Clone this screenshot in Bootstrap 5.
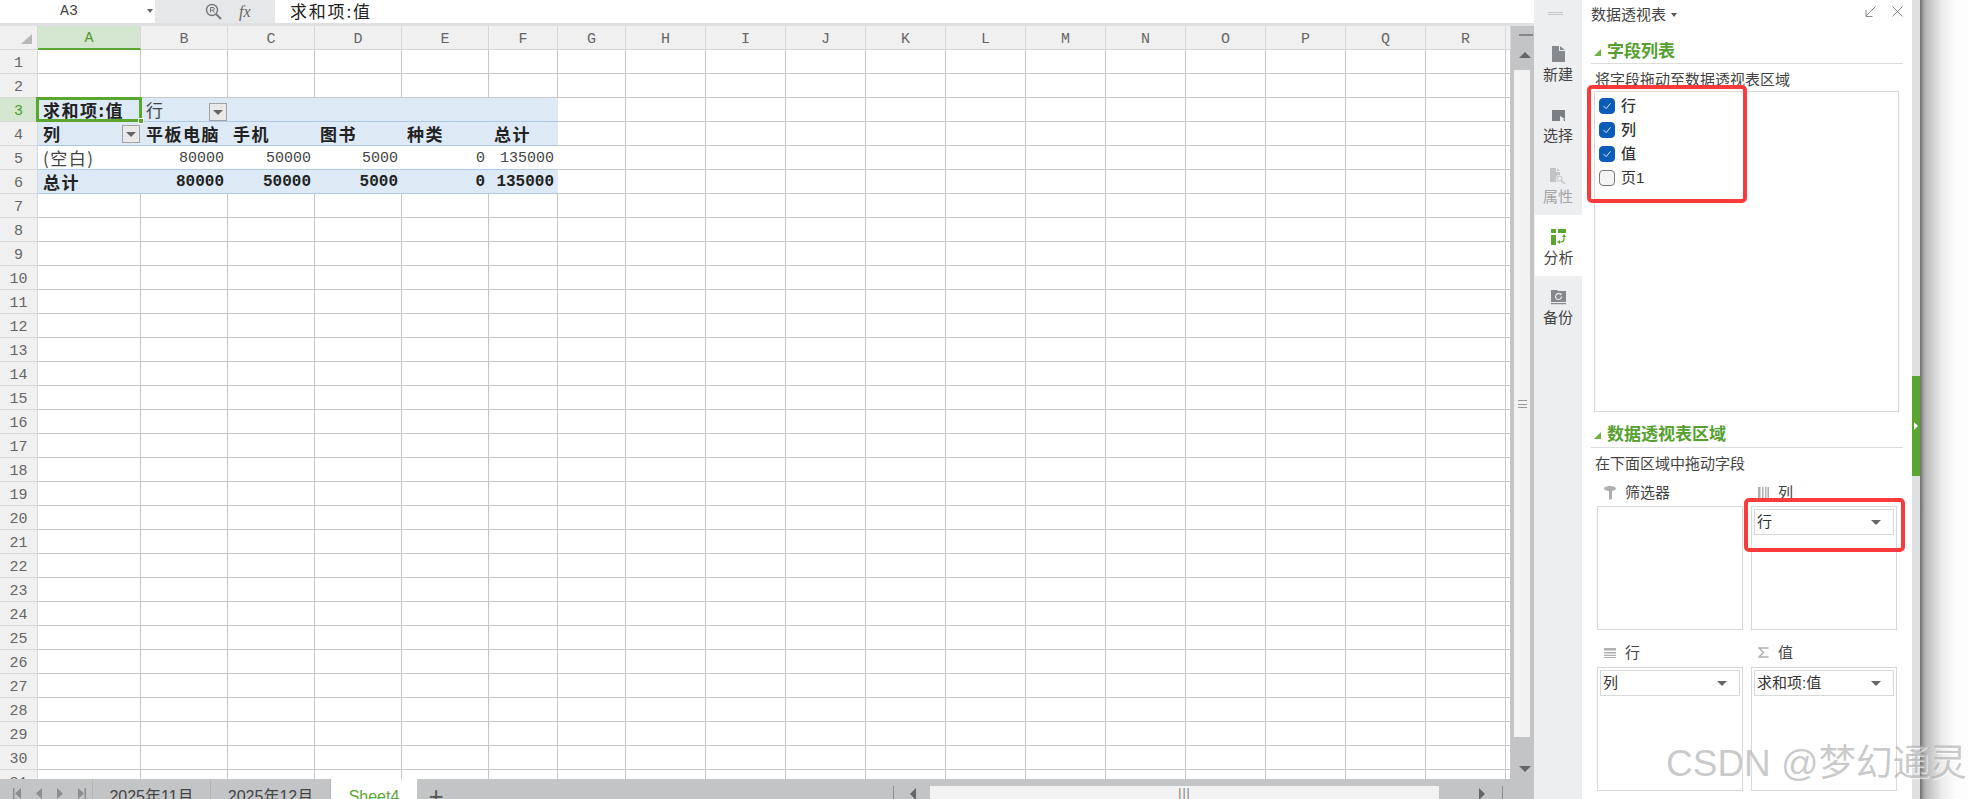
<!DOCTYPE html>
<html lang="zh-CN">
<head>
  <meta charset="UTF-8" />
  <title>数据透视表</title>
  <link href="https://cdn.jsdelivr.net/npm/bootstrap@5.3.3/dist/css/bootstrap.min.css" rel="stylesheet" />
  <style>
    html, body { height: 799px; overflow: hidden; }
    body {
      background: #fff;
      color: #333;
      font-family: "Liberation Sans", "Noto Sans CJK SC", sans-serif;
      font-size: 15px;
      line-height: 1.2;
    }
    .app-shell { width: 1968px; height: 799px; }
    .sheet-pane { width: 1534px; background: #c3c4c6; }

    /* formula bar */
    .fx-bar { height: 26px; background: #fff; border-bottom: 3px solid #dfe0e1; }
    .name-box { width: 155px; font: 15px "Liberation Mono", monospace; padding-left: 60px; color: #444; }
    .name-caret { position: absolute; left: 147px; top: 9px; border: 3px solid transparent; border-top: 4px solid #666; }
    .fx-tools { width: 120px; background: #e6e7e8; gap: 17px; padding-left: 50px; }
    .fx-mark { font: italic 16px "Liberation Serif", serif; color: #666; }
    .fx-value { padding-left: 15px; padding-bottom: 2px; font: 17px "Noto Sans CJK SC", sans-serif; letter-spacing: 1.8px; color: #222; }

    /* sheet */
    .grid-wrap { height: 753px; }
    .grid-area { width: 1511px; overflow: hidden; background: #fff; }
    .cells { border-collapse: separate; border-spacing: 0; table-layout: fixed; width: 1511px; }
    .cells td, .cells th {
      height: 24px; padding: 2px 4px 0; overflow: hidden; white-space: nowrap;
      border-right: 1px solid #c8c8c8; border-bottom: 1px solid #c8c8c8;
      font: 15px/21px "Liberation Mono", "Noto Sans CJK SC", monospace; color: #444; position: relative;
    }
    .cells thead th { height: 23px; padding-top: 3px; line-height: 19px; background: #f0f0f0; text-align: center; font-weight: 400; color: #666; border-color: #d8d8d8; }
    .cells .row-no { background: #f0f0f0; text-align: center; font-weight: 400; color: #666; padding: 4px 0 0; line-height: 19px; border-color: #d8d8d8; }
    .cells .corner::after {
      content: ""; position: absolute; right: 5px; bottom: 5px;
      border-left: 11px solid transparent; border-bottom: 10px solid #b7b7b7;
    }
    .cells .active-head { background: #d5e6d0; color: #4f9a2c; border-bottom: 2px solid #5aa72f; }
    .cells .row-no.active-head { border-bottom: 1px solid #d8d8d8; }
    .cells td.pv { border-right: 0; border-bottom: 1px solid #adc8e8; }
    .cells td.pv-fill { background: #ddeaf6; }
    .cells td.pv-bold { font-weight: 700; color: #222; }
    .cells td.pv-cjk { font-family: "Noto Sans CJK SC", sans-serif; font-size: 17px; line-height: 20px; letter-spacing: 1.5px; padding: 0 4px 0 5px; }
    .cells td.pv-num { text-align: right; padding-right: 4px; }
    .cells td.pv-num.pv-bold { font-size: 16px; }
    .cells td.picked { overflow: visible; z-index: 2; }
    .cells td.picked::before {
      content: ""; position: absolute; left: -2px; right: -1px; top: -1px; bottom: -1px;
      border: 3px solid #5aa72f;
    }
    .cells td.picked::after {
      content: ""; position: absolute; right: -3px; bottom: -3px; width: 6px; height: 6px;
      background: #5aa72f; border: 1px solid #fff;
    }
    .pv-drop {
      position: absolute; right: 1px; top: 3px; width: 18px; height: 18px;
      background: #e9e9e9; border: 1px solid #a3a3a3;
    }
    .pv-drop::after {
      content: ""; position: absolute; left: 3px; top: 6px;
      border: 5px solid transparent; border-top: 5px solid #666;
    }
    .pv-drop-far { left: 68px; right: auto; top: 5px; }

    /* vertical scrollbar */
    .vscroll { width: 23px; padding: 0 4px 0 3px; background: #c3c4c6; }
    .vs-cap { height: 44px; }
    .vs-cap-end { height: 42px; }
    .vs-thumb { background: #f2f2f2; }
    .vs-dash { width: 14px; height: 2px; background: #888; position: absolute; left: 5px; top: 8px; }
    .vs-up, .vs-down { position: absolute; left: 3px; border: 6px solid transparent; border-width: 0 6px 6px; border-bottom-color: #666; width: 0; }
    .vs-up { top: 26px; left: 5px; }
    .vs-down { bottom: 7px; left: 5px; border-width: 6px 6px 0; border-top-color: #666; border-bottom-color: transparent; }
    .vs-grip { width: 9px; height: 8px; border-top: 1px solid #999; border-bottom: 1px solid #999; position: relative; }
    .vs-grip::after { content: ""; position: absolute; left: 0; right: 0; top: 3px; border-top: 1px solid #999; }

    /* sheet tabs */
    .tab-strip { height: 20px; background: #c3c4c6; font-size: 16px; color: #444; overflow: hidden; }
    .tab-nav { width: 93px; border-right: 1px solid #b5b5b5; gap: 15px; padding-left: 13px; padding-top: 9px; }
    .tab-nav svg { flex: none; }
    .sheet-tab { height: 20px; padding-top: 8px; text-align: center; border-right: 1px solid #b5b5b5; line-height: 20px; white-space: nowrap; }
    .sheet-tab-a { width: 118px; }
    .sheet-tab-b { width: 120px; }
    .sheet-tab-on { width: 86px; background: #fff; color: #5aa72f; border-right: 0; }
    .add-tab { width: 38px; text-align: center; font-size: 26px; line-height: 20px; padding-top: 7px; color: #555; }
    .hscroll { margin-left: auto; width: 641px; padding-top: 7px; height: 20px; }
    .hs-sep { width: 1px; height: 13px; background: #8e8e8e; }
    .hs-left, .hs-right { width: 0; height: 0; margin-top: 2px; border: 6px solid transparent; }
    .hs-left { border-right-color: #666; border-left-width: 0; margin-left: 16px; margin-right: 14px; }
    .hs-right { border-left-color: #666; border-right-width: 0; margin-left: 40px; margin-right: 17px; }
    .hs-thumb { width: 509px; background: #f2f2f2; text-align: center; font-size: 12px; line-height: 14px; color: #777; letter-spacing: 1px; }

    /* side tabs */
    .side-tabs { width: 48px; background: #edeef0; padding-top: 32px; }
    .side-drag { position: absolute; left: 14px; top: 12px; width: 15px; height: 3px; border-top: 1px solid #c5c5c5; border-bottom: 1px solid #c5c5c5; }
    .side-item { height: 61px; padding-top: 14px; font-size: 15px; color: #444; gap: 4px; }
    .side-item svg { display: block; }
    .side-off { color: #a5a5a5; }
    .side-on { background: #fff; margin-left: 1px; }

    /* task pane */
    .task-pane { width: 330px; padding: 0 9px; background: #fff; }
    .pane-top { height: 32px; padding-top: 6px; font-size: 15px; color: #444; }
    .pane-caret { display: inline-block; margin-left: 5px; vertical-align: 3px; border: 3px solid transparent; border-top: 4px solid #555; border-bottom: 0; }
    .pane-head {
      height: 32px; display: flex; align-items: center; gap: 6px; padding-left: 3px; padding-top: 10px;
      color: #55a02e; font-weight: 700; font-size: 17px; border-bottom: 1px solid #dcdcdc;
    }
    .pane-head-low { height: 36px; padding-top: 12px; }
    .pane-tri { width: 0; height: 0; border-left: 7px solid transparent; border-bottom: 7px solid #6cb33f; }
    .pane-note { padding: 7px 0 3px 4px; font-size: 15px; line-height: 18px; color: #444; height: 27px; }
    .field-box { position: relative; margin: 0 4px 0 3px; height: 321px; border: 1px solid #d8d8d8; padding: 2px 0 0 4px; }
    .field-line { height: 24px; margin: 0; min-height: 0; padding: 0; gap: 6px; font-size: 15px; color: #333; }
    .field-line b { font-weight: 500; }
    .field-line .form-check-input {
      margin: 0; width: 16px; height: 16px; flex: none; border-radius: 4px; border-color: #777; background-color: #f4f4f4;
    }
    .field-line .form-check-input:checked {
      background-color: #0b5cb8; border-color: #0b5cb8;
      background-image: url("data:image/svg+xml,%3csvg xmlns='http://www.w3.org/2000/svg' viewBox='0 0 16 16'%3e%3cpath fill='none' stroke='%23fff' stroke-width='1' d='M4 8l3 3 5-6'/%3e%3c/svg%3e");
    }
    .red-mark { position: absolute; border: 4px solid #fb3a3c; border-radius: 5px; z-index: 5; pointer-events: none; }
    .red-fields { left: -8px; top: -7px; width: 160px; height: 118px; }
    .red-zone { left: -8px; top: -9px; width: 161px; height: 54px; }
    .zone-grid { display: grid; grid-template-columns: 146px 146px; column-gap: 8px; padding-left: 6px; }
    .zone-label { height: 31px; padding: 5px 0 0 7px; gap: 9px; font-size: 15px; color: #444; display: flex; align-items: center; }
    .zone-label-wide { height: 37px; padding-top: 8px; }
    .zone-box { position: relative; height: 124px; border: 1px solid #d8d8d8; padding: 2px 2px 0; }
    .zone-chip {
      height: 26px; border: 1px solid #d8d8d8; padding: 0 2px; font-size: 15px; line-height: 24px; color: #333;
      display: flex; justify-content: space-between; align-items: center;
    }
    .chip-caret { width: 0; height: 0; margin-right: 10px; border: 5px solid transparent; border-top: 5px solid #666; border-bottom: 0; }

    /* right edge */
    .pane-edge { width: 8px; background: #dfe0e2; padding-top: 376px; }
    .edge-green { height: 100px; background: #58a52f; position: relative; }
    .edge-green::after {
      content: ""; position: absolute; left: 2px; top: 46px;
      border: 4px solid transparent; border-left: 4px solid #fff; border-right: 0;
    }
    .desk-shade { flex: 1; background: linear-gradient(to right, #6f6f6f, #b5b5b5 5px, #ececec 22px, #fdfdfd 36px); }

    .csdn-mark {
      position: absolute; left: 1666px; top: 742px; font-size: 37px; line-height: 44px; white-space: nowrap;
      color: rgba(150,150,150,.5); text-shadow: 1px 1px 1px rgba(255,255,255,.7); z-index: 6;
    }
  </style>
</head>
<body>
  <div class="app-shell d-flex position-relative">

    <!-- 表格区域 -->
    <div class="sheet-pane d-flex flex-column">
      <div class="fx-bar d-flex">
        <div class="name-box position-relative d-flex align-items-center">A3<span class="name-caret"></span></div>
        <div class="fx-tools d-flex align-items-center">
          <svg width="17" height="17" viewBox="0 0 17 17" fill="none" stroke="#777" stroke-width="1.4"><circle cx="7" cy="7" r="5.5"/><path d="M11 11l5 5" stroke-width="2"/><path d="M5.5 9.5v-5h2.5a1.3 1.3 0 0 1 0 2.7h-2.5M7.5 7.2l1.8 2.3" stroke-width="1"/></svg>
          <span class="fx-mark">fx</span>
        </div>
        <div class="fx-value d-flex align-items-center">求和项:值</div>
      </div>

      <div class="grid-wrap d-flex">
        <div class="grid-area">
          <table class="cells" id="cells"></table>
        </div>
        <div class="vscroll d-flex flex-column">
          <div class="vs-cap position-relative"><span class="vs-dash"></span><span class="vs-up"></span></div>
          <div class="vs-thumb flex-grow-1 d-flex align-items-center justify-content-center"><div class="vs-grip"></div></div>
          <div class="vs-cap-end position-relative"><span class="vs-down"></span></div>
        </div>
      </div>

      <div class="tab-strip d-flex">
        <div class="tab-nav d-flex">
          <svg width="8" height="11" viewBox="0 0 8 11" fill="#8d8d8d"><path d="M0 0h1.500v11H0zM8 0v11L2 5.500z"/></svg>
          <svg width="6" height="11" viewBox="0 0 6 11" fill="#8d8d8d"><path d="M6 0v11L0 5.500z"/></svg>
          <svg width="6" height="11" viewBox="0 0 6 11" fill="#8d8d8d"><path d="M0 0v11l6-5.500z"/></svg>
          <svg width="8" height="11" viewBox="0 0 8 11" fill="#8d8d8d"><path d="M6.500 0H8v11H6.500zM0 0v11l6-5.500z"/></svg>
        </div>
        <div class="sheet-tab sheet-tab-a">2025年11月</div>
        <div class="sheet-tab sheet-tab-b">2025年12月</div>
        <div class="sheet-tab sheet-tab-on">Sheet4</div>
        <div class="add-tab">+</div>
        <div class="hscroll d-flex">
          <span class="hs-sep"></span>
          <span class="hs-left"></span>
          <div class="hs-thumb">|||</div>
          <span class="hs-right"></span>
          <span class="hs-sep"></span>
        </div>
      </div>
    </div>

    <!-- 侧边按钮 -->
    <div class="side-tabs position-relative">
      <span class="side-drag"></span>
      <div class="side-item d-flex flex-column align-items-center">
        <svg width="13" height="16" viewBox="0 0 13 16" fill="#85888c"><path d="M0 0h7v5h6v11H0zM8 0l5 4H8z"/></svg>
        <span>新建</span>
      </div>
      <div class="side-item d-flex flex-column align-items-center">
        <svg width="14" height="16" viewBox="0 0 14 16"><path fill="#7b7e82" d="M1 3h13v11H1z"/><path fill="#edeef0" d="M9 9l5 3-2 .5 1.500 2H9z"/></svg>
        <span>选择</span>
      </div>
      <div class="side-item side-off d-flex flex-column align-items-center">
        <svg width="16" height="16" viewBox="0 0 16 16" fill="#c1c3c6"><path d="M0 0h6v4h4v3a4 4 0 0 0-3 7H0zM7 0l3 3H7z"/><circle cx="9.500" cy="10.500" r="2.500" fill="none" stroke="#c1c3c6"/><path d="M11 12.500l4 3.500" stroke="#c1c3c6" stroke-width="1.500"/></svg>
        <span>属性</span>
      </div>
      <div class="side-item side-on d-flex flex-column align-items-center">
        <svg width="15" height="16" viewBox="0 0 15 16"><path fill="#5aa72f" d="M0 0h5v4H0zM7 0h8v4H7zM0 6h5v10H0z"/><path fill="none" stroke="#5aa72f" stroke-width="1.200" d="M13 8v2a3 3 0 0 1-3 3H8"/><path fill="#5aa72f" d="M13 5l2 3h-4zM6 13l3-2v4z"/></svg>
        <span>分析</span>
      </div>
      <div class="side-item d-flex flex-column align-items-center">
        <svg width="15" height="15" viewBox="0 0 15 15"><path fill="#85888c" d="M0 0h6l1 1h8v11H0zM0 13h15v1.200H0z"/><path fill="none" stroke="#edeef0" stroke-width="1.100" d="M10.500 6.500a3 3 0 1 1-1-2.200"/><path fill="#edeef0" d="M8.500 2.500l2.500 1.500-2 1.500z"/></svg>
        <span>备份</span>
      </div>
    </div>

    <!-- 数据透视表窗格 -->
    <div class="task-pane">
      <div class="pane-top d-flex justify-content-between">
        <div>数据透视表<span class="pane-caret"></span></div>
        <div class="d-flex gap-3">
          <svg width="11" height="11" viewBox="0 0 11 11" fill="none" stroke="#888"><path d="M10.500.5L1 10M1 4v6.500h6.500"/></svg>
          <svg width="11" height="11" viewBox="0 0 11 11" fill="none" stroke="#888"><path d="M.5.5l10 10M10.500.5l-10 10"/></svg>
        </div>
      </div>
      <div class="pane-head"><span class="pane-tri"></span>字段列表</div>
      <div class="pane-note">将字段拖动至数据透视表区域</div>
      <div class="field-box">
        <span class="red-mark red-fields"></span>
        <label class="field-line form-check d-flex align-items-center"><input class="form-check-input" type="checkbox" checked><b>行</b></label>
        <label class="field-line form-check d-flex align-items-center"><input class="form-check-input" type="checkbox" checked><b>列</b></label>
        <label class="field-line form-check d-flex align-items-center"><input class="form-check-input" type="checkbox" checked><b>值</b></label>
        <label class="field-line form-check d-flex align-items-center"><input class="form-check-input" type="checkbox">页1</label>
      </div>
      <div class="pane-head pane-head-low"><span class="pane-tri"></span>数据透视表区域</div>
      <div class="pane-note">在下面区域中拖动字段</div>
      <div class="zone-grid">
        <div class="zone-label">
          <svg width="12" height="14" viewBox="0 0 12 14" fill="#b0b0b0"><path d="M0 2.500C0 1 3 0 6 0s6 1 6 2.500S9.500 5 8 5v8l-3 1V5C3 5 0 4 0 2.500z"/></svg>筛选器
        </div>
        <div class="zone-label">
          <svg width="11" height="12" viewBox="0 0 11 12" fill="#b0b0b0"><path d="M0 0h2.500v12H0zM4 0h1.500v12H4zM7 0h1.500v12H7zM9.500 0H11v12H9.500z"/></svg>列
        </div>
        <div class="zone-box"></div>
        <div class="zone-box">
          <span class="red-mark red-zone"></span>
          <div class="zone-chip">行<span class="chip-caret"></span></div>
        </div>
        <div class="zone-label zone-label-wide">
          <svg width="12" height="10" viewBox="0 0 12 10" fill="#b0b0b0"><path d="M0 0h12v2.500H0zM0 4h12v1.500H0zM0 6.800h12v1.300H0zM0 9h12v1H0z"/></svg>行
        </div>
        <div class="zone-label zone-label-wide">
          <svg width="11" height="11" viewBox="0 0 11 11" fill="none" stroke="#b0b0b0" stroke-width="1.400"><path d="M10.500 1H1l4.500 4.500L1 10h9.500"/></svg>值
        </div>
        <div class="zone-box">
          <div class="zone-chip">列<span class="chip-caret"></span></div>
        </div>
        <div class="zone-box">
          <div class="zone-chip">求和项:值<span class="chip-caret"></span></div>
        </div>
      </div>
    </div>

    <div class="pane-edge"><div class="edge-green"></div></div>
    <div class="desk-shade"></div>
    <div class="csdn-mark">CSDN @梦幻通灵</div>
  </div>

  <script src="https://cdn.jsdelivr.net/npm/bootstrap@5.3.3/dist/js/bootstrap.bundle.min.js"></script>
  <script>
    const cols = 'ABCDEFGHIJKLMNOPQR'.split('');
    const widths = [38, 103, 87, 87, 87, 87, 69, 68, 80, 80, 80, 80, 80, 80, 80, 80, 80, 80, 80, 5];

    // 透视表的内容，其余单元格为空
    const pivot = {
      3: { fill: true, cells: [['求和项:值', 'cjk bold picked'], ['行<span class="pv-drop pv-drop-far"></span>', 'cjk'], ['', ''], ['', ''], ['', ''], ['', '']] },
      4: { fill: true, cells: [['列<span class="pv-drop"></span>', 'cjk bold'], ['平板电脑', 'cjk bold'], ['手机', 'cjk bold'], ['图书', 'cjk bold'], ['种类', 'cjk bold'], ['总计', 'cjk bold']] },
      5: { fill: false, cells: [['(空白)', 'cjk'], ['80000', 'num'], ['50000', 'num'], ['5000', 'num'], ['0', 'num'], ['135000', 'num']] },
      6: { fill: true, cells: [['总计', 'cjk bold'], ['80000', 'num bold'], ['50000', 'num bold'], ['5000', 'num bold'], ['0', 'num bold'], ['135000', 'num bold']] }
    };

    let html = '<colgroup>' + widths.map(w => `<col style="width:${w}px">`).join('') + '</colgroup>';
    html += '<thead><tr><th class="corner"></th>';
    cols.forEach((c, i) => { html += `<th class="${i === 0 ? 'active-head' : ''}">${c}</th>`; });
    html += '<th></th></tr></thead><tbody>';

    for (let r = 1; r <= 31; r++) {
      html += `<tr><td class="row-no ${r === 3 ? 'active-head' : ''}">${r}</td>`;
      const p = pivot[r];
      for (let c = 0; c < cols.length + 1; c++) {
        if (p && c < 6) {
          const [text, kinds] = p.cells[c];
          let cls = 'pv' + (p.fill ? ' pv-fill' : '');
          kinds.split(' ').forEach(k => {
            if (k === 'picked') cls += ' picked';
            else if (k) cls += ' pv-' + k;
          });
          html += `<td class="${cls}">${text}</td>`;
        } else {
          html += '<td></td>';
        }
      }
      html += '</tr>';
    }
    document.getElementById('cells').innerHTML = html + '</tbody>';
  </script>
</body>
</html>
